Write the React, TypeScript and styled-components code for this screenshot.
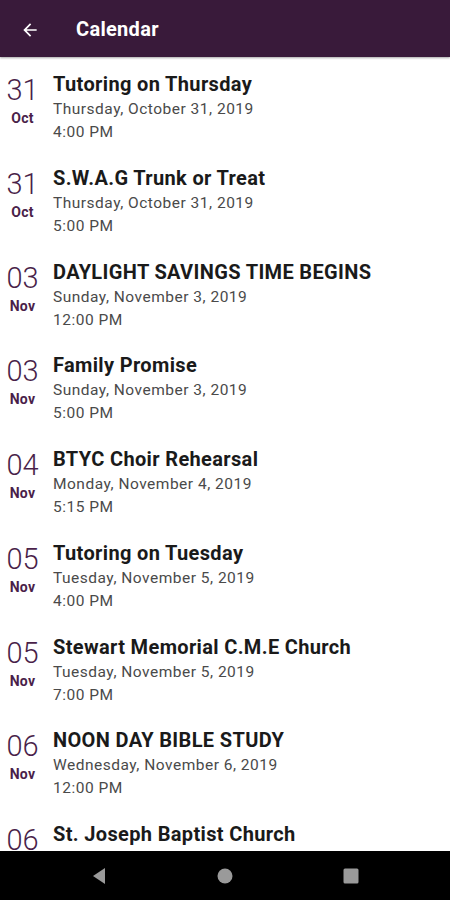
import React from "react";
import styled, { createGlobalStyle } from "styled-components";

const Global = createGlobalStyle`
  html, body { margin: 0; padding: 0; background: #ffffff; }
  body { font-family: Roboto, "Noto Sans", Arial, sans-serif; }
  * { box-sizing: border-box; }
`;

const Screen = styled.div`
  width: 450px;
  height: 900px;
  display: flex;
  flex-direction: column;
  overflow: hidden;
  background: #ffffff;
`;

const AppBar = styled.header`
  height: 57px;
  flex: 0 0 57px;
  background: #391a3a;
  display: flex;
  align-items: center;
  padding-left: 20px;
  padding-top: 3px;
  gap: 36px;
  box-shadow: 0 1px 2px rgba(0, 0, 0, 0.35);
  position: relative;
  z-index: 1;
`;

const BackButton = styled.span`
  display: flex;
  align-items: center;
  width: 20px;
  height: 20px;
  margin-top: -1px;
`;

const Title = styled.h1`
  margin: 0;
  color: #ffffff;
  font-size: 20px;
  font-weight: 700;
  margin-top: -2px;
  letter-spacing: 0.3px;
`;

const List = styled.div`
  flex: 1;
  overflow: hidden;
  display: grid;
  grid-auto-rows: 93.75px;
  align-content: start;
`;

const Row = styled.div`
  display: grid;
  grid-template-columns: 45px 1fr;
  column-gap: 8px;
  padding-top: 14px;
`;

const DateCol = styled.div`
  display: flex;
  flex-direction: column;
  align-items: center;
  color: #4a1f4a;
`;

const Day = styled.div`
  font-size: 29px;
  font-weight: 300;
  line-height: 30px;
  margin-top: 4px;
`;

const Month = styled.div`
  font-size: 14px;
  font-weight: 700;
  line-height: 16px;
  letter-spacing: 0.3px;
  margin-top: 5px;
`;

const Info = styled.div`
  display: flex;
  flex-direction: column;
`;

const EventTitle = styled.div`
  font-size: 20px;
  font-weight: 700;
  color: #1a1a1a;
  line-height: 27px;
  letter-spacing: 0.35px;
  white-space: nowrap;
`;

const Meta = styled.div`
  font-size: 15.5px;
  color: #4a4a4a;
  line-height: 23px;
  letter-spacing: 0.5px;
  white-space: nowrap;
`;

const NavBar = styled.nav`
  height: 49px;
  flex: 0 0 49px;
  background: #000000;
  display: flex;
  align-items: center;
  justify-content: space-around;
  padding: 0 36px;
  position: relative;
  z-index: 1;
`;

const NavIcon = styled.span`
  width: 20px;
  height: 20px;
  display: flex;
  align-items: center;
  justify-content: center;
`;

const events = [
  { day: "31", month: "Oct", title: "Tutoring on Thursday", date: "Thursday, October 31, 2019", time: "4:00 PM" },
  { day: "31", month: "Oct", title: "S.W.A.G Trunk or Treat", date: "Thursday, October 31, 2019", time: "5:00 PM" },
  { day: "03", month: "Nov", title: "DAYLIGHT SAVINGS TIME BEGINS", date: "Sunday, November 3, 2019", time: "12:00 PM" },
  { day: "03", month: "Nov", title: "Family Promise", date: "Sunday, November 3, 2019", time: "5:00 PM" },
  { day: "04", month: "Nov", title: "BTYC Choir Rehearsal", date: "Monday, November 4, 2019", time: "5:15 PM" },
  { day: "05", month: "Nov", title: "Tutoring on Tuesday", date: "Tuesday, November 5, 2019", time: "4:00 PM" },
  { day: "05", month: "Nov", title: "Stewart Memorial C.M.E Church", date: "Tuesday, November 5, 2019", time: "7:00 PM" },
  { day: "06", month: "Nov", title: "NOON DAY BIBLE STUDY", date: "Wednesday, November 6, 2019", time: "12:00 PM" },
  { day: "06", month: "Nov", title: "St. Joseph Baptist Church", date: "Wednesday, November 6, 2019", time: "7:00 PM" },
];

export default function App() {
  return (
    <Screen>
      <Global />
      <AppBar>
        <BackButton>
          <svg width="20" height="20" viewBox="0 0 24 24">
            <path d="M20 11H7.83l5.59-5.59L12 4l-8 8 8 8 1.41-1.41L7.83 13H20v-2z" fill="#ffffff" />
          </svg>
        </BackButton>
        <Title>Calendar</Title>
      </AppBar>
      <List>
        {events.map((e, i) => (
          <Row key={i}>
            <DateCol>
              <Day>{e.day}</Day>
              <Month>{e.month}</Month>
            </DateCol>
            <Info>
              <EventTitle>{e.title}</EventTitle>
              <Meta>{e.date}</Meta>
              <Meta>{e.time}</Meta>
            </Info>
          </Row>
        ))}
      </List>
      <NavBar>
        <NavIcon>
          <svg width="16" height="18" viewBox="0 0 16 18">
            <path d="M14 1 L2 9 L14 17 Z" fill="#9a9a9a" />
          </svg>
        </NavIcon>
        <NavIcon>
          <svg width="16" height="16" viewBox="0 0 16 16">
            <circle cx="8" cy="8" r="7.5" fill="#9a9a9a" />
          </svg>
        </NavIcon>
        <NavIcon>
          <svg width="16" height="16" viewBox="0 0 16 16">
            <rect x="0.5" y="0.5" width="15" height="15" rx="1.5" fill="#9a9a9a" />
          </svg>
        </NavIcon>
      </NavBar>
    </Screen>
  );
}
